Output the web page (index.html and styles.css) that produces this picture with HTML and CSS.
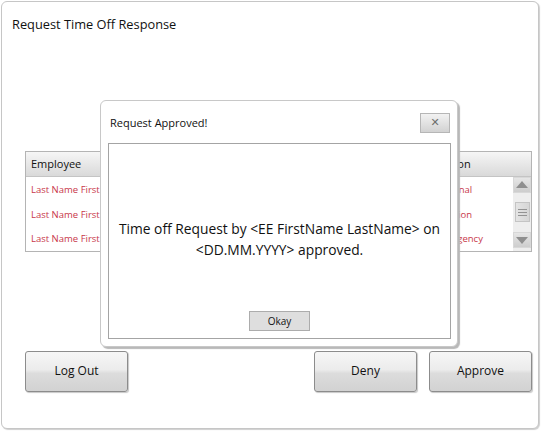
FILE: index.html
```html
<!DOCTYPE html>
<html>
<head>
<meta charset="utf-8">
<link rel="stylesheet" href="styles.css">
</head>
<body>
<div class="window">
  <div class="title">Request Time Off Response</div>
  <div class="table">
    <div class="thead">
      <div class="col-emp">Employee</div>
      <div class="col-mid"></div>
      <div class="col-reason">Reason</div>
      <div class="sb-head"></div>
    </div>
    <div class="tbody">
      <div class="rows">
        <div class="row"><div class="col-emp">Last Name First</div><div class="col-mid"></div><div class="col-reason">Optional</div></div>
        <div class="row"><div class="col-emp">Last Name First</div><div class="col-mid"></div><div class="col-reason">Vacation</div></div>
        <div class="row"><div class="col-emp">Last Name First</div><div class="col-mid"></div><div class="col-reason">Emergency</div></div>
      </div>
      <div class="scrollbar">
        <div class="sb-btn"><span class="tri-up"></span></div>
        <div class="sb-thumb"><span></span><span></span><span></span></div>
        <div class="sb-btn"><span class="tri-down"></span></div>
      </div>
    </div>
  </div>
  <div class="actions">
    <button class="btn">Log Out</button>
    <div class="right-actions">
      <button class="btn">Deny</button>
      <button class="btn">Approve</button>
    </div>
  </div>

  <div class="dialog">
    <div class="dlg-head">
      <span class="dlg-title">Request Approved!</span>
      <button class="close">&#x2715;</button>
    </div>
    <div class="dlg-body">
      <div class="message">Time off Request by &lt;EE FirstName LastName&gt; on<br>&lt;DD.MM.YYYY&gt; approved.</div>
      <button class="okay">Okay</button>
    </div>
  </div>
</div>
</body>
</html>
```
FILE: styles.css
```css
* { box-sizing: border-box; }
html, body { margin: 0; padding: 0; background: #fff; }
body {
  font-family: "Open Sans", "Noto Sans", sans-serif;
  color: #111;
  width: 544px;
  height: 433px;
  overflow: hidden;
}
.window {
  position: relative;
  margin: 1px 0 0 1px;
  width: 538px;
  height: 428px;
  border: 1px solid #c6c6c6;
  border-radius: 6px;
  box-shadow: 1px 1px 1px #cfcfcf;
  background: #fff;
}
.title {
  padding: 13px 0 0 10px;
  font-size: 12.8px;
  line-height: 18px;
  height: 31px;
}
.table {
  margin: 118px 0 0 23px;
  width: 507px;
  height: 101px;
  border: 1px solid #b4b4b4;
  display: flex;
  flex-direction: column;
}
.thead {
  height: 27px;
  display: flex;
  align-items: center;
  background: linear-gradient(#f6f6f6, #e6e6e6 55%, #d9d9d9);
  border-bottom: 1px solid #c4c4c4;
  font-size: 11px;
}
.col-emp { width: 100px; padding-left: 5px; white-space: nowrap; }
.col-mid { flex: 1; }
.col-reason { width: 80px; white-space: nowrap; }
.sb-head { width: 18px; }
.tbody { flex: 1; display: flex; }
.rows { flex: 1; padding-top: 1px; }
.row {
  display: flex;
  align-items: center;
  height: 24.5px;
  font-size: 9.5px;
  color: #c8384a;
}
.row .col-reason { padding-left: 1px; }
.scrollbar {
  width: 18px;
  background: #eeeeee;
  display: flex;
  flex-direction: column;
  justify-content: space-between;
  align-items: center;
  padding: 0 0 3px;
}
.sb-btn {
  width: 18px;
  height: 16px;
  background: linear-gradient(#e6e6e6, #cdcdcd);
  border: 1px solid #d8d8d8;
  display: flex;
  align-items: center;
  justify-content: center;
}
.tri-up {
  width: 0; height: 0;
  border-left: 6px solid transparent;
  border-right: 6px solid transparent;
  border-bottom: 7px solid #8f8f8f;
}
.tri-down {
  width: 0; height: 0;
  border-left: 6px solid transparent;
  border-right: 6px solid transparent;
  border-top: 7px solid #8f8f8f;
}
.sb-thumb {
  width: 15px;
  height: 20px;
  border: 1px solid #c4c4c4;
  background: linear-gradient(90deg, #e4e4e4, #d6d6d6);
  display: flex;
  flex-direction: column;
  justify-content: center;
  align-items: center;
  gap: 2px;
}
.sb-thumb span { width: 9px; height: 1px; background: #939393; }
.actions {
  margin: 99px 0 0 23px;
  width: 507px;
  display: flex;
  justify-content: space-between;
}
.right-actions { display: flex; gap: 12px; }
.btn {
  width: 103px;
  height: 41px;
  font-family: "Open Sans", "Noto Sans", sans-serif;
  font-size: 12px;
  color: #111;
  border: 1px solid #8c8c8c;
  border-radius: 3px;
  background: linear-gradient(#f6f6f6, #ececec 45%, #dcdcdc 55%, #d2d2d2);
  box-shadow: 1px 1px 1px #c8c8c8;
  padding: 0 0 2px;
}
.dialog {
  position: absolute;
  left: 98px;
  top: 98px;
  width: 358px;
  height: 247px;
  background: #fff;
  border: 1px solid #c8c8c8;
  border-radius: 6px;
  box-shadow: 2px 2px 1px #b8b8b8;
  display: flex;
  flex-direction: column;
}
.dlg-head {
  height: 42px;
  display: flex;
  align-items: flex-start;
  justify-content: space-between;
  padding: 12px 7px 0 9px;
}
.dlg-title { font-size: 11px; line-height: 16px; padding-top: 2px; }
.close {
  width: 30px;
  height: 20px;
  border: 1px solid #b6b6b6;
  background: linear-gradient(#f2f2f2, #d2d2d2);
  color: #6e6e6e;
  font-size: 11px;
  font-weight: bold;
  padding: 0;
  line-height: 18px;
  font-family: "DejaVu Sans", sans-serif;
}
.dlg-body {
  margin: 0 6px 7px 7px;
  flex: 1;
  border: 1px solid #a4a4a4;
  display: flex;
  flex-direction: column;
  align-items: center;
}
.message {
  flex: 1;
  display: flex;
  align-items: center;
  justify-content: center;
  text-align: center;
  font-size: 13.8px;
  line-height: 21px;
  padding-top: 22px;
}
.okay {
  width: 61px;
  height: 20px;
  margin-bottom: 7px;
  font-family: "Open Sans", "Noto Sans", sans-serif;
  font-size: 10px;
  color: #111;
  background: #dedede;
  border: 1px solid #acacac;
  padding: 0;
}
```
